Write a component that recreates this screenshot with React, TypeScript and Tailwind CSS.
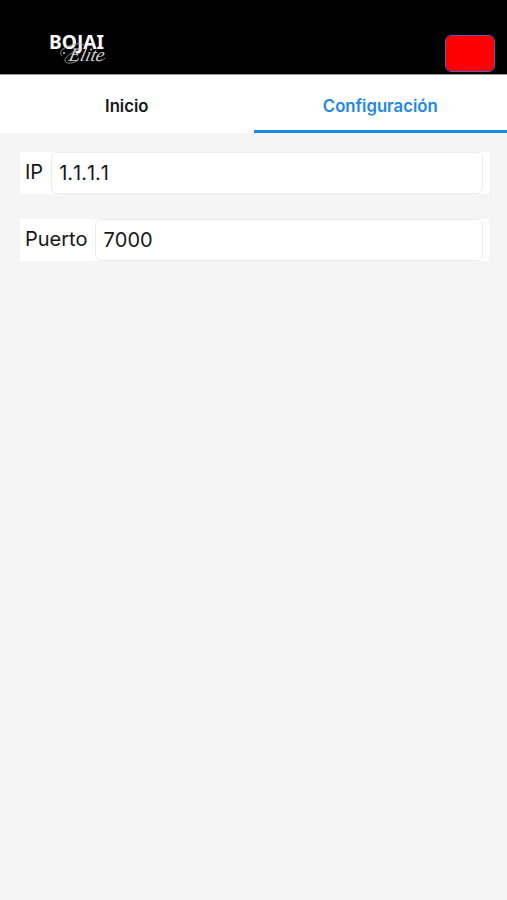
import { useState } from 'react';

const tabs = ['Inicio', 'Configuración'];

function Logo() {
  return (
    <svg width="64" height="44" viewBox="0 -10 64 44" className="text-white" aria-label="Bojai Elite">
      <text
        x="3"
        y="15.5"
        textLength="55"
        lengthAdjust="spacingAndGlyphs"
        fontFamily="'Noto Sans', sans-serif"
        fontWeight="700"
        fontSize="19"
        fill="currentColor"
      >
        BOJAI
      </text>
      <text
        x="29"
        y="28"
        transform="skewX(-14)"
        textLength="35"
        lengthAdjust="spacingAndGlyphs"
        fontFamily="'Liberation Serif', serif"
        fontStyle="italic"
        fontSize="19"
        fill="#d4d4d4"
      >
        Elite
      </text>
      {/* Flourishes around the script word */}
      <g fill="none" stroke="#a8a8a8" strokeWidth="0.8" strokeLinecap="round">
        <path d="M38 12c-5-3-15 0-21 4-3 2-3 5-1 7" />
        <path d="M31 18c-6 1-13 7-12 10 1 3 8 3 13-1" />
        <path d="M53 28c2 0 4-1 6-3" />
      </g>
      <circle cx="18" cy="20" r="1" fill="#cccccc" />
    </svg>
  );
}

function Field({ label, value, onChange }: { label: string; value: string; onChange: (value: string) => void }) {
  return (
    <label className="flex h-[42px] items-stretch bg-white px-1.5 text-[20px] text-[#171717]">
      <span className="-ml-px flex items-center pb-0.5 pr-2">{label}</span>
      <input
        value={value}
        onChange={(e) => onChange(e.target.value)}
        className="min-w-0 flex-1 rounded-md border border-[#ececec] bg-white px-[7px] outline-none [font-kerning:none]"
      />
    </label>
  );
}

export default function App() {
  const [active, setActive] = useState(1);
  const [ip, setIp] = useState('1.1.1.1');
  const [port, setPort] = useState('7000');

  return (
    <div className="flex h-screen flex-col bg-[#f5f5f5] font-['Inter',sans-serif]">
      <header className="flex h-[75px] shrink-0 items-end justify-between border-b border-[#999999] bg-black pl-[46px] pr-3">
        <div className="mb-[7px]">
          <Logo />
        </div>
        <button
          aria-label="Estado"
          className="mb-0.5 h-[37px] w-[50px] rounded-md border border-[#6a55b0] bg-[#ff0000] bg-clip-padding"
        />
      </header>

      <nav className="flex h-[58px] shrink-0 bg-white">
        {tabs.map((tab, i) => (
          <button
            key={tab}
            onClick={() => setActive(i)}
            className={
              i === active
                ? 'flex-1 border-b-[3px] border-[#1e88e5] pt-2 text-[16.7px] font-semibold text-[#1e88e5]'
                : 'flex-1 border-b-[3px] border-transparent pt-2 text-[16.7px] font-semibold text-[#171717]'
            }
          >
            {tab}
          </button>
        ))}
      </nav>

      <main className="flex flex-col gap-[25px] pl-5 pr-[18px] pt-[19px]">
        <Field label="IP" value={ip} onChange={setIp} />
        <Field label="Puerto" value={port} onChange={setPort} />
      </main>
    </div>
  );
}
